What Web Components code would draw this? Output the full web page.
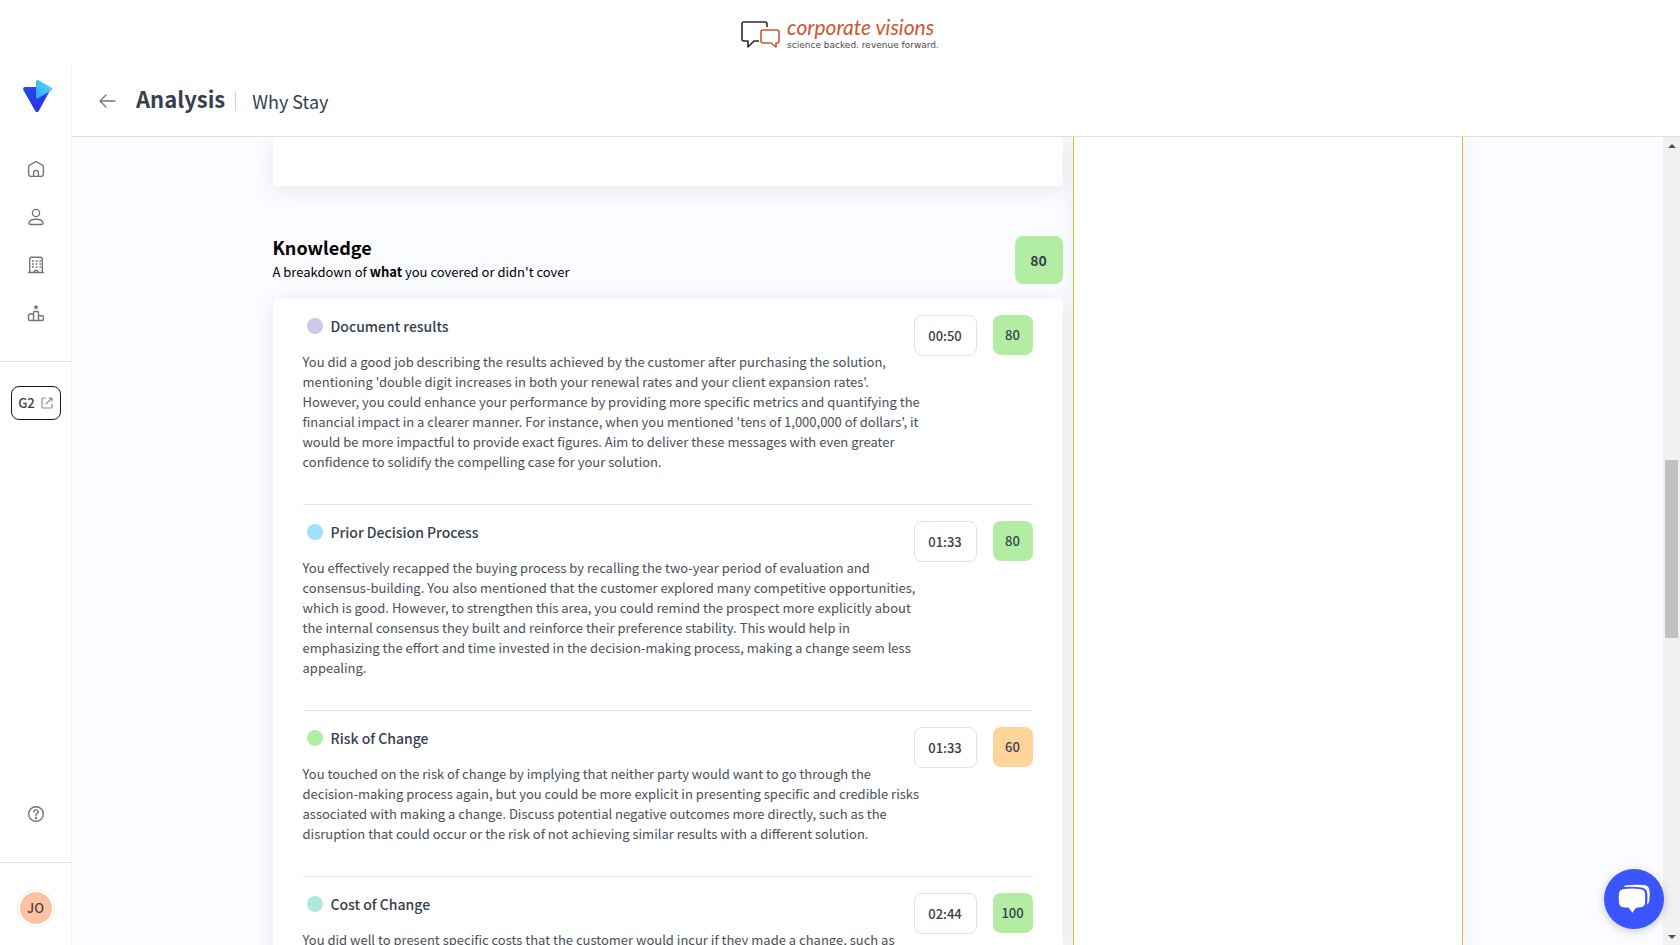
<!DOCTYPE html>
<html lang="en">
<head>
<meta charset="utf-8">
<title>Analysis - Why Stay</title>
<style>
  html, body {
    height: 100%;
    margin: 0;
  }

  body {
    font-family: "Noto Sans CJK SC", "Noto Sans", sans-serif;
    font-size: 13px;
    line-height: 20px;
    color: #36404c;
    background: #fff;
    overflow: hidden;
  }
</style>
</head>
<body>
<app-shell>
  <brand-banner slot="banner"></brand-banner>
  <side-nav slot="nav"></side-nav>
  <page-header slot="header" heading="Analysis">Why Stay</page-header>

  <empty-card></empty-card>
  <score-section heading="Knowledge" score="80">
    <span slot="summary">A breakdown of <b>what</b> you covered or didn't cover</span>
    <feedback-row heading="Document results" time="00:50" score="80" dot="#cfc8e8">You did a good job describing the results achieved by the customer after purchasing the solution, mentioning 'double digit increases in both your renewal rates and your client expansion rates'. However, you could enhance your performance by providing more specific metrics and quantifying the financial impact in a clearer manner. For instance, when you mentioned 'tens of 1,000,000 of dollars', it would be more impactful to provide exact figures. Aim to deliver these messages with even greater confidence to solidify the compelling case for your solution.</feedback-row>
    <feedback-row heading="Prior Decision Process" time="01:33" score="80" dot="#a0e0fa">You effectively recapped the buying process by recalling the two-year period of evaluation and consensus-building. You also mentioned that the customer explored many competitive opportunities, which is good. However, to strengthen this area, you could remind the prospect more explicitly about the internal consensus they built and reinforce their preference stability. This would help in emphasizing the effort and time invested in the decision-making process, making a change seem less appealing.</feedback-row>
    <feedback-row heading="Risk of Change" time="01:33" score="60" dot="#b3eca3">You touched on the risk of change by implying that neither party would want to go through the decision-making process again, but you could be more explicit in presenting specific and credible risks associated with making a change. Discuss potential negative outcomes more directly, such as the disruption that could occur or the risk of not achieving similar results with a different solution.</feedback-row>
    <feedback-row heading="Cost of Change" time="02:44" score="100" dot="#aeeadb">You did well to present specific costs that the customer would incur if they made a change, such as</feedback-row>
  </score-section>

  <chat-launcher slot="chat"></chat-launcher>
</app-shell>

<script>
  function attach(el, html) {
    el.attachShadow({ mode: "open" }).innerHTML = html;
  }

  class AppShell extends HTMLElement {
    constructor() {
      super();
      attach(this, `
        <style>
        :host{
            display:flex;
            flex-direction:column;
            height:100vh;
            position:relative;
            overflow:hidden;
        }
        .below{
            flex:1;
            display:flex;
            min-height:0;
        }
        .page{
            flex:1;
            display:flex;
            flex-direction:column;
            min-width:0;
        }
        .viewport{
            flex:1;
            display:flex;
            min-height:0;
        }
        main{
            flex:1;
            display:flex;
            justify-content:center;
            min-width:0;
            overflow:hidden;
            background:#fbfcff;
        }
        .columns{
            flex:1;
            max-width:1190px;
            display:flex;
            gap:10px;
        }
        .report{
            flex:1;
            min-width:0;
        }
        aside{
            width:390px;
            box-sizing:border-box;
            background:#fff;
            border:solid #dcb94c;
            border-width:0 1px;
            box-shadow:0 0 20px rgba(40,50,60,.08);
        }
        .chat{
            position:absolute;
            right:16px;
            bottom:16px;
        }
        </style>

        <slot name="banner"></slot>
        <div class="below">
          <slot name="nav"></slot>
          <div class="page">
            <slot name="header"></slot>
            <div class="viewport">
              <main>
                <div class="columns">
                  <div class="report"><slot></slot></div>
                  <aside></aside>
                </div>
              </main>
              <scroll-track></scroll-track>
            </div>
          </div>
        </div>
        <div class="chat"><slot name="chat"></slot></div>
      `);
    }
  }

  class BrandBanner extends HTMLElement {
    constructor() {
      super();
      attach(this, `
        <style>
        :host{
            display:flex;
            justify-content:center;
            align-items:center;
            gap:6px;
            height:65px;
            background:#fff;
        }
        svg{
            margin-top:4px;
        }
        .words{
            display:flex;
            flex-direction:column;
        }
        .name{
            font:italic 21px/24px Lato, sans-serif;
            color:#d0552f;
        }
        .tagline{
            font:9px/12px "DejaVu Sans", sans-serif;
            color:#4a4a4a;
        }
        </style>
        <svg width="40" height="28" viewBox="0 0 40 28" fill="none" stroke-width="1.6" stroke-linejoin="round">
          <path stroke="#2b2b2b" d="M26 6V3a2 2 0 0 0-2-2H3a2 2 0 0 0-2 2v15a2 2 0 0 0 2 2h4v6l6-6h5"/>
          <path stroke="#d0552f" d="M22 9h14a2 2 0 0 1 2 2v9a2 2 0 0 1-2 2h-1v4l-5-4h-8a2 2 0 0 1-2-2v-9a2 2 0 0 1 2-2z"/>
        </svg>
        <div class="words">
          <span class="name">corporate visions</span>
          <span class="tagline">science backed. revenue forward.</span>
        </div>
      `);
    }
  }

  class SideNav extends HTMLElement {
    constructor() {
      super();
      attach(this, `
        <style>
        :host{
            display:flex;
            flex-direction:column;
            align-items:center;
            width:72px;
            box-sizing:border-box;
            padding:15px 0 18px;
            background:#fff;
            border-right:1px solid #f0f2f4;
        }
        nav{
            display:flex;
            flex-direction:column;
            margin:33px 0 24px;
        }
        a{
            display:flex;
            align-items:center;
            justify-content:center;
            width:48px;
            height:48px;
            color:#6f757a;
        }
        a svg{
            fill:none;
            stroke:currentColor;
            stroke-width:1.4;
            stroke-linejoin:round;
            stroke-linecap:round;
        }
        hr{
            width:100%;
            margin:0;
            border:0;
            border-top:1px solid #dfe2e4;
        }
        button{
            display:flex;
            align-items:center;
            justify-content:center;
            box-sizing:border-box;
            font:inherit;
            font-weight:500;
            cursor:pointer;
        }
        .g2{
            gap:6px;
            width:50px;
            height:34px;
            margin-top:24px;
            padding:0;
            color:#36404c;
            background:#fff;
            border:1px solid #15181b;
            border-radius:8px;
        }
        .help{
            margin:auto 0 24px;
        }
        .avatar{
            width:38px;
            height:38px;
            margin-top:26px;
            padding:2px;
            color:#4b4340;
            background:#ffc3a3 content-box;
            border:1px solid #e6f0f0;
            border-radius:50%;
        }
        </style>

        <svg width="34" height="32" viewBox="-4 0 34 32">
          <defs>
            <linearGradient id="deep" x1="0" y1="0" x2="0" y2="1"><stop offset="0" stop-color="#2549e6"/><stop offset="1" stop-color="#2a30f2"/></linearGradient>
            <linearGradient id="sky" x1="0" y1="1" x2="1" y2="0"><stop offset="0" stop-color="#2fa6f5"/><stop offset="1" stop-color="#58e0f4"/></linearGradient>
          </defs>
          <path fill="url(#deep)" d="M2 7h24c2 0 2 2 1 3.500L16 30.500c-1 2-3 2-4 0L.6 10.500C-.4 8.500.4 7 2 7z"/>
          <path fill="url(#sky)" d="M13 1.800C13 .2 14.400-.4 15.800.4l12.400 7.200c1.500.9 1.500 2 0 2.900l-13 7.700c-1.300.7-2.200.2-2.200-1.200z"/>
        </svg>
        <nav>
          <a href="#home" aria-label="Home"><svg width="18" height="18" viewBox="0 0 18 18"><path d="M9 1.500 2.600 5.200Q1.600 5.800 1.600 7v7q0 2.400 2.400 2.400h10q2.400 0 2.400-2.400V7q0-1.200-1-1.800zM6.600 16.400v-3.600a2.400 2.400 0 0 1 4.800 0v3.600"/></svg></a>
          <a href="#people" aria-label="People"><svg width="18" height="18" viewBox="0 0 18 18"><circle cx="9" cy="5" r="3.600"/><path d="M4 16.500h10q2.500 0 2-2-.8-3.300-7-3.300t-7 3.300q-.5 2 2 2z"/></svg></a>
          <a href="#company" aria-label="Company"><svg width="18" height="18" viewBox="0 0 18 18"><path d="M1.500 16.500h15M2.700 16.500V3q0-1.700 1.700-1.700h9.200q1.700 0 1.700 1.700v13.500M7 16.300q.2-2.100 2-2.100t2 2.100"/><path stroke-dasharray="1.800 1.900" stroke-linecap="butt" d="M5 5h9M5 8h9M5 11h9"/></svg></a>
          <a href="#ranking" aria-label="Leaderboard"><svg width="18" height="18" viewBox="0 0 18 18"><path d="M6.500 16.500V8.800Q6.500 7.500 7.800 7.500h2.400q1.300 0 1.300 1.300v7.700M6.500 10H3Q1.500 10 1.500 11.500V15q0 1.500 1.500 1.500h12q1.500 0 1.500-1.500v-1.800q0-1.500-1.500-1.500h-3.500"/><path fill="currentColor" stroke-width=".6" d="m9 1.300.6 1.200 1.400.2-1 1 .2 1.400L9 4.400l-1.200.7.200-1.400-1-1 1.400-.2z"/></svg></a>
        </nav>
        <hr>
        <button class="g2" type="button">G2
          <svg width="12" height="12" viewBox="0 0 12 12" fill="none" stroke="#8a8f93" stroke-width="1.2"><path d="M5 1H2Q1 1 1 2v8q0 1 1 1h8q1 0 1-1V7M5 7l5.500-5.500M7.500 1H11v3.500"/></svg>
        </button>
        <a class="help" href="#help" aria-label="Help"><svg width="18" height="18" viewBox="0 0 18 18"><circle cx="9" cy="9" r="7.300"/><path d="M6.800 7Q6.900 4.900 9 4.900T11.200 7Q11.200 8 10 8.700 9 9.300 9 10.500"/><circle cx="9" cy="13" r=".5" fill="currentColor"/></svg></a>
        <hr>
        <button class="avatar" type="button">JO</button>
      `);
    }
  }

  class PageHeader extends HTMLElement {
    constructor() {
      super();
      attach(this, `
        <style>
        :host{
            display:flex;
            align-items:center;
            height:72px;
            box-sizing:border-box;
            padding:0 27px;
            background:#fff;
            border-bottom:1px solid #dee1e4;
        }
        button{
            display:flex;
            margin-right:20px;
            padding:0;
            border:0;
            background:none;
            cursor:pointer;
        }
        h1{
            margin:0;
            padding-bottom:6px;
            font-size:22px;
            line-height:32px;
            font-weight:700;
        }
        .trail{
            margin-left:10px;
            padding-left:16px;
            border-left:1px solid #cfd3d6;
            font-size:18px;
            line-height:20px;
        }
        </style>
        <button type="button" aria-label="Back">
          <svg width="17" height="14" viewBox="0 0 17 14" fill="none" stroke="#73787c" stroke-width="1.3" stroke-linecap="round" stroke-linejoin="round"><path d="M16 7H1M7 1 1 7l6 6"/></svg>
        </button>
        <h1>${this.getAttribute("heading")}</h1>
        <span class="trail"><slot></slot></span>
      `);
    }
  }

  class EmptyCard extends HTMLElement {
    constructor() {
      super();
      attach(this, `
        <style>
        :host{
            display:block;
            height:49px;
            margin-bottom:50px;
            background:#fff;
            border-radius:0 0 4px 4px;
            box-shadow:0 4px 20px rgba(40,50,60,.1);
        }
        </style>
      `);
    }
  }

  class ScoreBadge extends HTMLElement {
    constructor() {
      super();
      const score = Number(this.getAttribute("value"));
      attach(this, `
        <style>
        :host{
            flex:none;
            display:flex;
            align-items:center;
            justify-content:center;
            width:40px;
            height:40px;
            font-weight:500;
            background:${score < 70 ? "#fdd59a" : "#b3eca3"};
            border-radius:8px;
        }
        :host([large]){
            width:48px;
            height:48px;
            font-size:14px;
            font-weight:700;
        }
        </style>
        <span>${score}</span>
      `);
    }
  }

  class ScoreSection extends HTMLElement {
    constructor() {
      super();
      attach(this, `
        <style>
        :host{
            display:block;
        }
        header{
            display:flex;
            justify-content:space-between;
            margin-bottom:13px;
            color:#000;
        }
        h2{
            margin:0;
            font-size:18px;
            line-height:22px;
            font-weight:700;
        }
        p{
            margin:0;
            line-height:28px;
        }
        score-badge{
            color:#36404c;
        }
        .card{
            padding:0 30px;
            background:#fff;
            border-radius:4px;
            box-shadow:0 4px 20px rgba(40,50,60,.1);
        }
        </style>
        <header>
          <div>
            <h2>${this.getAttribute("heading")}</h2>
            <p><slot name="summary"></slot></p>
          </div>
          <score-badge large value="${this.getAttribute("score")}"></score-badge>
        </header>
        <div class="card"><slot></slot></div>
      `);
    }
  }

  class FeedbackRow extends HTMLElement {
    constructor() {
      super();
      attach(this, `
        <style>
        :host{
            display:flex;
            gap:16px;
            padding:16px 0 32px;
            border-bottom:1px solid #dfe2e4;
        }
        .text{
            flex:1;
            min-width:0;
        }
        h3{
            display:flex;
            align-items:center;
            gap:8px;
            margin:0 0 15px;
            padding-left:4px;
            font-size:14px;
            line-height:22px;
            font-weight:500;
        }
        .dot{
            width:16px;
            height:16px;
            border-radius:50%;
            background:${this.getAttribute("dot")};
        }
        /* the copy starts below the time box, so it may run a little under it */
        p{
            margin:0 -24px 0 0;
            color:#4a4f57;
        }
        time{
            display:flex;
            align-items:center;
            justify-content:center;
            width:63px;
            height:41px;
            box-sizing:border-box;
            font-weight:500;
            border:1px solid #dfe2e4;
            border-radius:8px;
        }
        </style>
        <div class="text">
          <h3><span class="dot"></span>${this.getAttribute("heading")}</h3>
          <p><slot></slot></p>
        </div>
        <time>${this.getAttribute("time")}</time>
        <score-badge value="${this.getAttribute("score")}"></score-badge>
      `);
    }
  }

  class ScrollTrack extends HTMLElement {
    constructor() {
      super();
      attach(this, `
        <style>
        :host{
            display:flex;
            flex-direction:column;
            align-items:center;
            justify-content:space-between;
            width:17px;
            box-sizing:border-box;
            padding:7px 0 6px;
            background:#f1f1f1;
        }
        .rail{
            flex:1;
            display:flex;
            flex-direction:column;
            align-self:stretch;
            padding:0 2px;
        }
        .before{ flex:312; }
        .thumb{ flex:177; background:#c1c1c1; }
        .after{ flex:297; }
        </style>
        <svg width="8" height="4" fill="#505050"><path d="M0 4 4 0l4 4z"/></svg>
        <div class="rail">
          <div class="before"></div>
          <div class="thumb"></div>
          <div class="after"></div>
        </div>
        <svg width="8" height="4" fill="#505050"><path d="M0 0l4 4 4-4z"/></svg>
      `);
    }
  }

  class ChatLauncher extends HTMLElement {
    constructor() {
      super();
      attach(this, `
        <style>
        :host{
            display:block;
        }
        button{
            display:flex;
            align-items:center;
            justify-content:center;
            width:60px;
            height:60px;
            padding:0;
            border:0;
            border-radius:50%;
            background:#3a55fb;
            box-shadow:0 2px 10px rgba(0,0,0,.2);
            cursor:pointer;
        }
        </style>
        <button type="button" aria-label="Open chat">
          <svg width="32" height="30" viewBox="0 0 32 30" fill="#fff">
            <path d="M5 5.200Q14 4 23 5.200q3.500.5 4 4 .6 5 0 10-.5 3.500-4 4l-5 .5-3.600 5-3.600-5-5.800-.5q-3.500-.5-4-4-.6-5 0-10 .5-3.500 4-4z"/>
            <path d="M7 1.600Q16 .2 26 1q4.800.5 5.400 5 .8 6-.4 12-.4 1.600-2 2.600.8-6 .2-11.600Q28.600 4.200 23.600 3.400 15.600 2.300 6 3z"/>
          </svg>
        </button>
      `);
    }
  }

  customElements.define("score-badge", ScoreBadge);
  customElements.define("scroll-track", ScrollTrack);
  customElements.define("brand-banner", BrandBanner);
  customElements.define("side-nav", SideNav);
  customElements.define("page-header", PageHeader);
  customElements.define("empty-card", EmptyCard);
  customElements.define("feedback-row", FeedbackRow);
  customElements.define("score-section", ScoreSection);
  customElements.define("chat-launcher", ChatLauncher);
  customElements.define("app-shell", AppShell);
</script>
</body>
</html>
